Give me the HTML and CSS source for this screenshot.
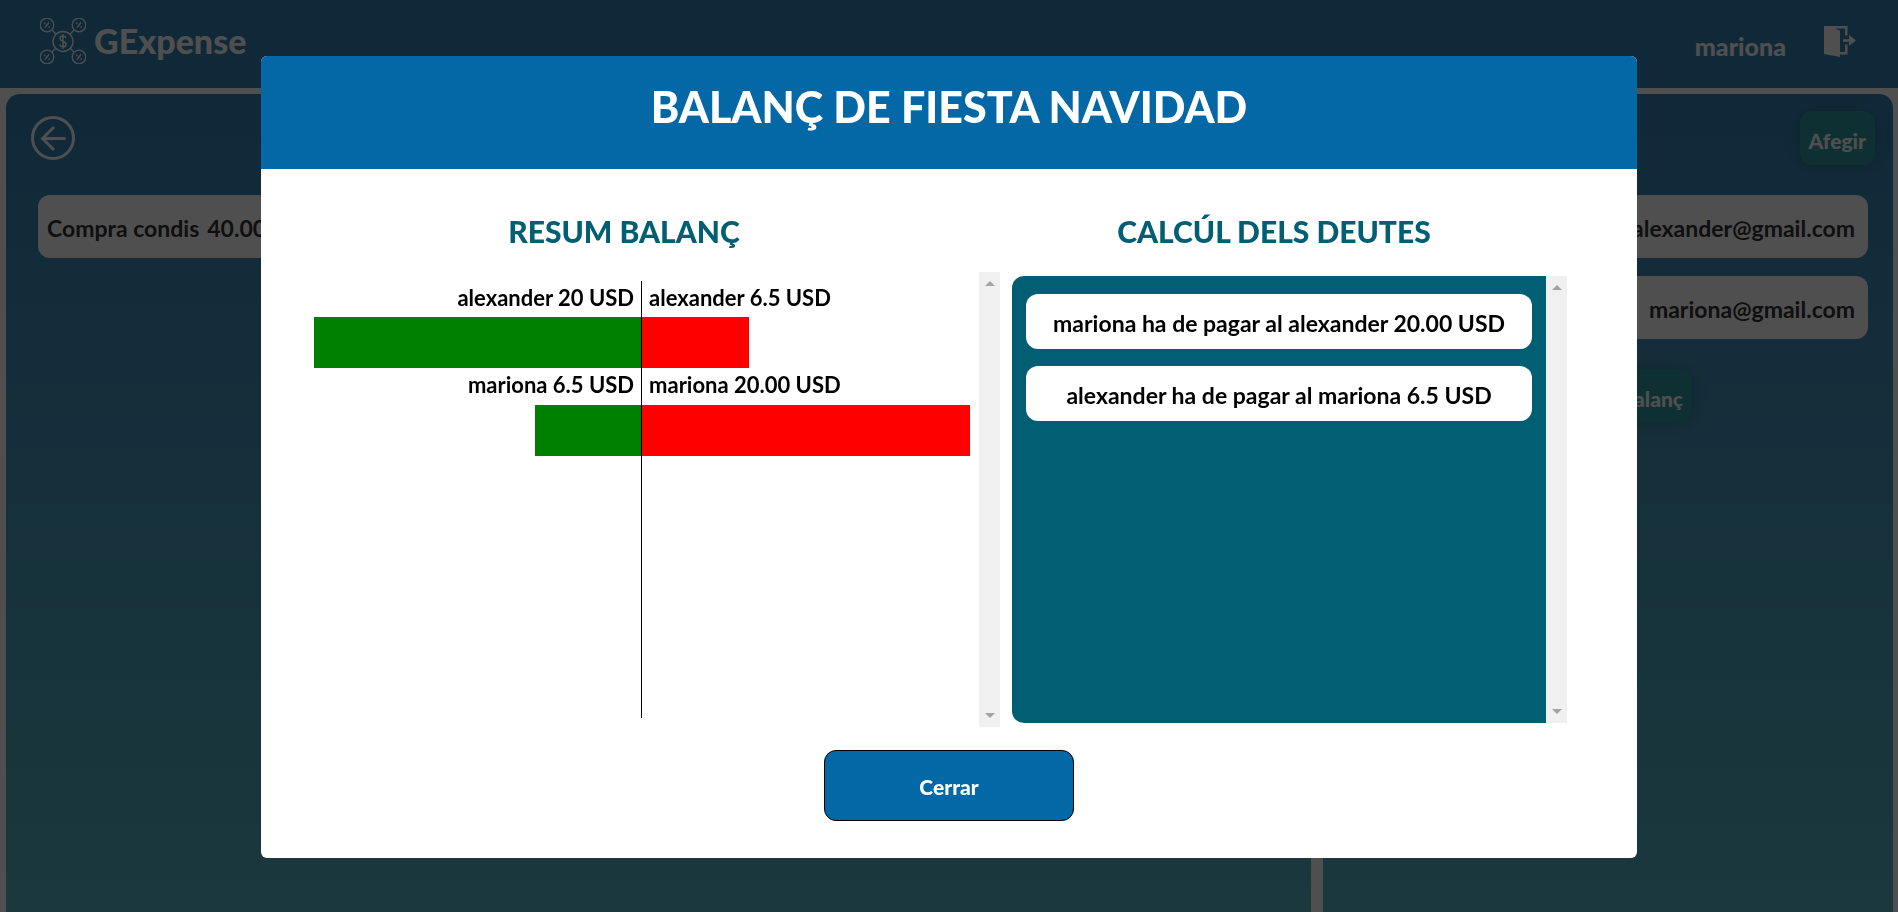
FILE: index.html
```html
<!DOCTYPE html>
<html lang="ca">
<head>
<meta charset="utf-8">
<meta name="viewport" content="width=device-width, initial-scale=1">
<title>GExpense</title>
<link rel="stylesheet" href="styles.css">
</head>
<body>
<div class="page">
  <header class="topbar">
    <a class="brand" href="#">
      <svg class="brand-logo" viewBox="0 0 46 46" fill="none" stroke="currentColor" stroke-width="1.3" aria-hidden="true">
        <circle cx="23" cy="23.500" r="10"/>
        <circle cx="7" cy="7" r="6.800"/><circle cx="39" cy="7" r="6.800"/>
        <circle cx="7" cy="39" r="6.800"/><circle cx="39" cy="39" r="6.800"/>
        <path d="M12 12l4 4.300M34 12l-4 4.300M12 34l4-4M34 34l-4-4"/>
        <path d="M5 9.500l4-5M37 9.500l4-5M5 41.500l4-5M37 41.500l4-5"/>
        <path d="M4 5.500h1.500M8.500 9h1.500M36 5.500h1.500M40.500 9h1.500M4 37.500h1.500M8.500 41h1.500M36 37.500h1.500M40.500 41h1.500"/>
        <path d="M26 20c-.3-1.300-1.500-2-3-2-1.800 0-3 1-3 2.500 0 3.600 6 2 6 5.700 0 1.600-1.200 2.600-3 2.600-1.700 0-2.800-.8-3.100-2.200M23 16v15" stroke-width="1.500"/>
      </svg>
      <span>GExpense</span>
    </a>
    <div class="account">
      <span class="account-name">mariona</span>
      <button class="icon-button" type="button" aria-label="Sortir">
        <svg class="logout-icon" viewBox="0 0 32 32" aria-hidden="true">
          <path d="M0 1.500 L16 4.500 V31 L0 28z" fill="currentColor"/>
          <path d="M0 0H23.500V9.500H21V2.500H11L16 4.500H0zM16 26h5v-7.500h2.500V28.500H16z" fill="currentColor"/>
          <path d="M19 13.200h6V9l7 5.500L25 20v-4.200h-6z" fill="currentColor"/>
        </svg>
      </button>
    </div>
  </header>

  <main class="workspace">
    <section class="panel panel-expenses">
      <div class="toolbar">
        <button class="icon-button" type="button" aria-label="Tornar">
          <svg class="back-icon" viewBox="0 0 44 44" fill="none" stroke="currentColor" stroke-width="3" aria-hidden="true">
            <circle cx="22" cy="22" r="20.500"/>
            <path d="M34.500 22.500H12M23 11L11.500 22.500L23 34"/>
          </svg>
        </button>
      </div>
      <ul class="list list-expenses">
        <li class="card"><span>Compra condis</span><span>40.00 USD</span></li>
      </ul>
    </section>
    <section class="panel panel-members">
      <div class="toolbar toolbar-end">
        <button class="action" type="button">Afegir</button>
      </div>
      <ul class="list">
        <li class="card card-end">alexander@gmail.com</li>
        <li class="card card-end">mariona@gmail.com</li>
      </ul>
      <button class="action action-balance" type="button">Veure balanç</button>
    </section>
  </main>
</div>

<div class="overlay">
  <div class="dialog" role="dialog" aria-modal="true" aria-labelledby="dialog-title">
    <h1 class="dialog-title" id="dialog-title">BALANÇ DE FIESTA NAVIDAD</h1>
    <div class="dialog-body">
      <div class="section-titles">
        <h2>RESUM BALANÇ</h2>
        <h2>CALCÚL DELS DEUTES</h2>
      </div>
      <div class="sections">
        <div class="chart-box">
          <div class="chart">
            <div class="side side-paid">
              <span class="label">alexander 20 USD</span>
              <div class="bar" style="width:100%"></div>
              <span class="label">mariona 6.5 USD</span>
              <div class="bar" style="width:32.5%"></div>
            </div>
            <div class="side side-owed">
              <span class="label">alexander 6.5 USD</span>
              <div class="bar" style="width:32.5%"></div>
              <span class="label">mariona 20.00 USD</span>
              <div class="bar" style="width:100%"></div>
            </div>
          </div>
          <div class="scrollbar"><i class="arrow-up"></i><i class="arrow-down"></i></div>
        </div>
        <div class="debts-box">
          <ul class="debts">
            <li>mariona ha de pagar al alexander 20.00 USD</li>
            <li>alexander ha de pagar al mariona 6.5 USD</li>
          </ul>
          <div class="scrollbar"><i class="arrow-up"></i><i class="arrow-down"></i></div>
        </div>
      </div>
      <button class="close" type="button">Cerrar</button>
    </div>
  </div>
</div>
</body>
</html>
```
FILE: styles.css
```css
* { box-sizing: border-box; }
body {
  margin: 0;
  background: #fff;
  color: #000;
  font: 700 23px/28px Lato, "Open Sans", sans-serif;
  overflow: hidden;
}
button { font: inherit; border: 0; cursor: pointer; }
ul { list-style: none; margin: 0; padding: 0; }
h1, h2 { margin: 0; }

.page { display: flex; flex-direction: column; min-height: 100vh; }

.topbar {
  display: flex;
  justify-content: space-between;
  height: 88px;
  padding: 0 42px 0 40px;
  background: #0467a6;
  color: #fff;
}
.brand {
  display: flex;
  align-items: center;
  gap: 8px;
  padding-bottom: 6px;
  color: inherit;
  font-size: 34px;
  font-weight: 900;
  text-decoration: none;
}
.brand-logo { width: 46px; height: 46px; }
.account {
  display: flex;
  align-items: center;
  gap: 38px;
  font-size: 25px;
  font-weight: 900;
}
.account-name { padding-top: 4px; }
.icon-button { padding: 0; background: none; color: #fff; line-height: 0; }
.logout-icon { width: 32px; height: 32px; margin-bottom: 5px; }

.workspace {
  flex: 1;
  display: grid;
  grid-template-columns: 1305fr 570fr;
  gap: 12px;
  padding: 6px 5px 0 6px;
}
.panel {
  display: flex;
  flex-direction: column;
  padding-top: 17px;
  border-radius: 14px 14px 0 0;
  background: linear-gradient(#0467a6, #30a4b8);
}
.toolbar { display: flex; align-items: center; height: 54px; padding: 0 18px 0 25px; }
.toolbar-end { justify-content: flex-end; }
.back-icon { width: 44px; height: 44px; }
.list { display: grid; gap: 18px; padding: 30px 25px 0; }
.list-expenses { padding-left: 32px; }
.card {
  display: flex;
  align-items: center;
  gap: 8px;
  height: 63px;
  padding: 2px 13px 0 9px;
  border-radius: 12px;
  background: #fff;
}
.card-end { justify-content: flex-end; }
.action {
  height: 54px;
  padding: 5px 9px 0;
  border-radius: 12px;
  background: #00828f;
  box-shadow: 0 0 16px rgba(0, 0, 0, 0.3);
  color: #fff;
  font-size: 21px;
  font-weight: 900;
}
.action-balance { align-self: center; min-width: 168px; margin-top: 30px; text-align: right; }

.overlay {
  position: fixed;
  inset: 0;
  padding-top: 56px;
  background: rgba(20, 20, 20, 0.75);
}
.dialog {
  width: 72.5%;
  margin: 0 auto;
  border-radius: 6px;
  overflow: hidden;
  background: #fff;
}
.dialog-title {
  padding: 24px 0 35px;
  background: #0467a6;
  color: #fff;
  font-size: 43px;
  font-weight: 900;
  line-height: 54px;
  text-align: center;
}
.dialog-body {
  display: flex;
  flex-direction: column;
  padding: 44px 38px 37px;
}
.section-titles {
  display: grid;
  grid-template-columns: 1fr 1fr;
  margin-bottom: 23px;
  color: #025f73;
  text-align: center;
}
.section-titles h2 { font-size: 30px; font-weight: 900; line-height: 36px; }
.sections {
  display: flex;
  gap: 12px;
  height: 455px;
  padding: 0 32px 0 6px;
}
.chart-box { flex: 690; display: flex; gap: 9px; padding-left: 9px; }
.chart { flex: 1; display: grid; grid-template-columns: 1fr 1fr; padding: 9px 0; }
.side { display: flex; flex-direction: column; }
.side-paid { align-items: flex-end; border-right: 1px solid #000; }
.label { height: 36px; padding: 3px 7px 0; font-size: 22px; }
.bar { height: 51px; background: #f00; }
.side-paid .bar { background: #008000; }
.label:not(:first-child) { height: 37px; }

.debts-box { flex: 558; display: flex; margin: 4px 0; }
.debts {
  flex: 1;
  display: flex;
  flex-direction: column;
  gap: 17px;
  padding: 18px 14px;
  border-radius: 12px 0 0 12px;
  background: #025f73;
}
.debts li {
  padding: 15px 0 12px;
  border-radius: 12px;
  background: #fff;
  text-align: center;
}
.scrollbar {
  display: flex;
  flex-direction: column;
  justify-content: space-between;
  align-items: center;
  width: 21px;
  padding: 9px 0;
  background: #f0f0f0;
}
.arrow-up, .arrow-down { border: 5px solid transparent; }
.arrow-up { border-top: 0; border-bottom-color: #a3a3a3; }
.arrow-down { border-bottom: 0; border-top-color: #a3a3a3; }

.close {
  align-self: center;
  width: 250px;
  height: 71px;
  margin-top: 23px;
  padding-top: 4px;
  border: 1px solid #000;
  border-radius: 12px;
  background: #0467a6;
  color: #fff;
  font-size: 21px;
  font-weight: 900;
}
```
